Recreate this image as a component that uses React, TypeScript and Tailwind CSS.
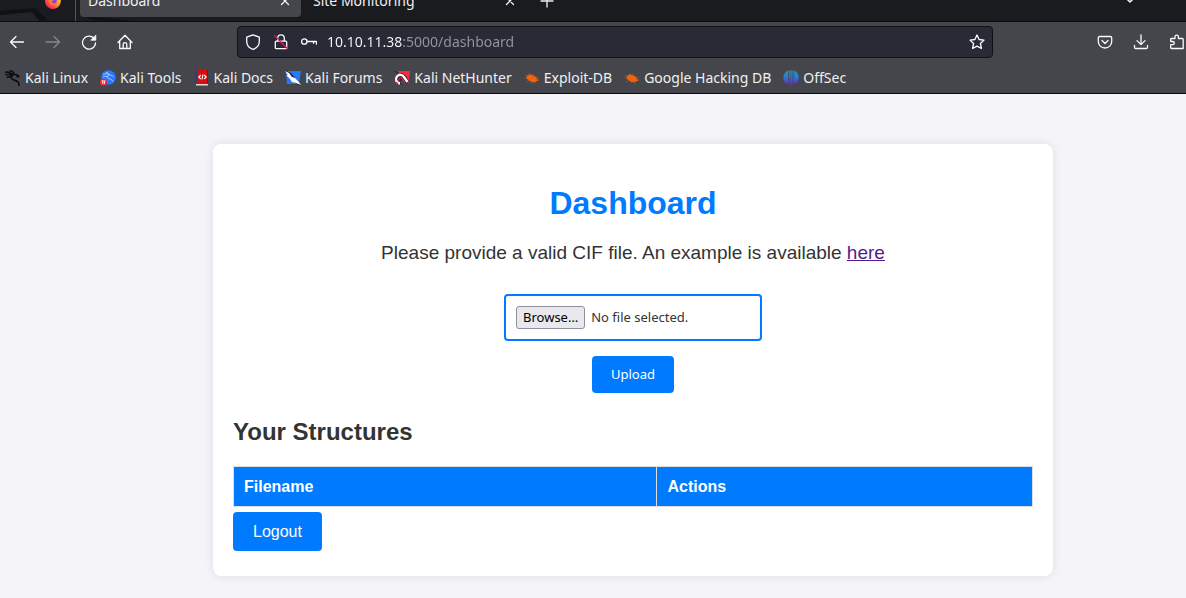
import type { ReactNode } from "react";

type IconProps = { children: ReactNode; className?: string };

const Icon = ({ children, className = "" }: IconProps) => (
  <svg
    viewBox="0 0 16 16"
    className={`h-4 w-4 shrink-0 ${className}`}
    fill="none"
    stroke="currentColor"
    strokeWidth="1.3"
    strokeLinecap="round"
    strokeLinejoin="round"
    aria-hidden="true"
  >
    {children}
  </svg>
);

const CloseIcon = () => (
  <Icon>
    <path d="M4.5 4.5l7 7M11.5 4.5l-7 7" />
  </Icon>
);

const FirefoxLogo = () => (
  <svg viewBox="0 0 16 16" className="h-4 w-4 shrink-0" aria-hidden="true">
    <defs>
      <linearGradient id="fox" x1="1" y1="0" x2="0.1" y2="1">
        <stop offset="0" stopColor="#ffe23a" />
        <stop offset="0.45" stopColor="#ff9a2a" />
        <stop offset="0.75" stopColor="#ff3b53" />
        <stop offset="1" stopColor="#e3158a" />
      </linearGradient>
    </defs>
    <path d="M8 16A8 8 0 0 1 .8 4.5L2.5 2l1 2L6 3l4-3c0 2 2 2.5 3 4l1-1a8 8 0 0 1-6 13z" fill="url(#fox)" />
    <circle cx="8" cy="7.5" r="3.8" fill="#8a3ff0" />
    <path d="M3.5 6.5c2-1 4-.5 5 1-1.5.2-2 1-1.3 2C8 10.5 10 11 11.8 9c-.3 2.5-2 3.5-4 3.5A4.5 4.5 0 0 1 3.5 8z" fill="#ff7a2d" />
  </svg>
);

const KaliLinuxLogo = () => (
  <Icon className="text-[#0c0c0e]">
    <path
      d="M.5 2.2C3 1.5 5 2 7.200 4.300M1 4.700c2-.8 4-.5 6 .8M2.500 7.300c1.500-.8 3-.9 4.500-.6M5 .8C7 1 9 3 9.500 4.500c2-.2 3.500.8 4.500 2l-2 .2M9 4.500c-2.500.5-3.500 2.500-2 4.500 1.500 1.600 4.500 1.200 6 3 .8 1 1 2 1 3.500"
      strokeWidth="1.600"
    />
  </Icon>
);

const KaliToolsLogo = () => (
  <svg viewBox="0 0 16 16" className="h-4 w-4 shrink-0" aria-hidden="true">
    <circle cx="8.5" cy="7.5" r="7.3" fill="#2777ff" />
    <path d="M3 4.5c3-1.2 4.5-.8 6 .5M3 7c2.500-1 4-.8 5-.2M6 2.500c2 .3 3 1 3.500 2.500 2 0 3 1 4 2M9.500 5c-2 .5-2.500 2-1.500 3 1.500 1.300 4 1 5 3.500" fill="none" stroke="#b9d3ff" strokeWidth=".9" />
    <circle cx="3.500" cy="12.300" r="3.500" fill="#f0272d" />
    <path d="M1.500 11h4M2.700 11v3M4.400 11v3" stroke="#fff" strokeWidth=".9" />
  </svg>
);

const KaliDocsLogo = () => (
  <svg viewBox="0 0 16 16" className="h-4 w-4 shrink-0" aria-hidden="true">
    <path d="M2 1l1.500-1v15L2 14.500z" fill="#283a70" />
    <path d="M3 0h11v14H3z" fill="#d80d12" />
    <path d="M2 14h12v1.500H2z" fill="#e8d5d5" />
    <path d="M13 0h1v14h-1z" fill="#9b090d" />
    <path d="M6.700 5L4.800 7l1.900 2M10.300 5l1.900 2-1.900 2M9 4.500L8 9.500" fill="none" stroke="#fff" strokeWidth="1.100" />
  </svg>
);

const KaliForumsLogo = () => (
  <svg viewBox="0 0 16 16" className="h-4 w-4 shrink-0" aria-hidden="true">
    <path d="M1 1h15l-2 13H2z" fill="#2878f5" />
    <path d="M0 0l6 3 4 5 5 6v2l-5-3-5-3-2-5z" fill="#20252d" />
    <path d="M0 1l4 2 3 4 3 1 3 3 3 4-5-2-4-1-3-4-3-3 2 .5z" fill="#fff" />
  </svg>
);

const NetHunterLogo = () => (
  <svg viewBox="0 0 16 16" className="h-4 w-4 shrink-0" aria-hidden="true">
    <path d="M4 1h12l-1.500 13L4 4z" fill="#f32c3c" />
    <path d="M0 1l5 1-1 2M2 13l-1-4 2-4 5-2 4 3 3 5-2 3-4-4-3 1 2 4z" fill="#262a32" />
    <path d="M6 13.500C2 13 1 9 3 6.500 5 4 8.500 4.500 10 7l3.500 5" fill="none" stroke="#fff" strokeWidth="2.300" />
    <path d="M5 11c-1-2.500 1.500-4 3-2.500l2.500 4M2 12l2 2" fill="none" stroke="#df1f42" strokeWidth="1.300" />
  </svg>
);

const ExploitLogo = () => (
  <svg viewBox="0 0 16 16" className="h-4 w-4 shrink-0" aria-hidden="true">
    <path d="M1 5l3 1M.5 8h4M2 12l3.500-1.500M5 3l1.500 2M9 3.500l1 2M7 13.500l1-2M11 14l-.5-2M12 7l3 1M13 10h2.500" stroke="#a8501d" strokeWidth=".9" />
    <path d="M2.500 7C4 4.500 6.500 4 9 5.200L12 7l1 2 1.500 1.500-2 .8C10 13 7 12 5 10.500L3 9z" fill="#f4600c" />
  </svg>
);

const OffSecLogo = () => (
  <svg viewBox="0 0 16 16" className="h-4 w-4 shrink-0" aria-hidden="true">
    <defs>
      <linearGradient id="offsec" gradientUnits="userSpaceOnUse" x1="0" y1="0" x2="0" y2="16">
        <stop offset="0" stopColor="#16a7bd" />
        <stop offset="0.5" stopColor="#3770cc" />
        <stop offset="1" stopColor="#6a18df" />
      </linearGradient>
    </defs>
    <path d="M5 .8v13.400C-1 12-1.200 3 5 .8zM5.700.5h1.100v14.200l-1.100-.3zM7.400.5h1.400V16H7.400zM9.400.5h1.100v13.900l-1.100.3zM11.200.8c6.200 2.200 6 11.200 0 13.400z" fill="url(#offsec)" />
  </svg>
);

const bookmarks = [
  { label: "Kali Linux", logo: <KaliLinuxLogo /> },
  { label: "Kali Tools", logo: <KaliToolsLogo /> },
  { label: "Kali Docs", logo: <KaliDocsLogo /> },
  { label: "Kali Forums", logo: <KaliForumsLogo /> },
  { label: "Kali NetHunter", logo: <NetHunterLogo /> },
  { label: "Exploit-DB", logo: <ExploitLogo /> },
  { label: "Google Hacking DB", logo: <ExploitLogo /> },
  { label: "OffSec", logo: <OffSecLogo /> },
];

const ToolButton = ({ label, disabled, children }: { label: string; disabled?: boolean; children: ReactNode }) => (
  <button
    type="button"
    aria-label={label}
    disabled={disabled}
    className="flex h-8 w-8 shrink-0 items-center justify-center disabled:text-[#85868c]"
  >
    {children}
  </button>
);

const TabStrip = () => (
  <div className="relative flex h-[22px] items-end overflow-hidden border-b border-[#0c0c0d] bg-[#1a1b1f] text-[#f0f0f2]">
    <svg className="absolute left-0 top-0 h-[22px] w-40" viewBox="0 0 160 22" aria-hidden="true">
      <path d="M0 11l35-3 10 9 3 5H0z" fill="#101114" />
      <path d="M0 15l32-3 8 10H0z" fill="#222328" />
      <path d="M80 15l60 7H98z" fill="#101114" />
    </svg>
    <div className="relative mb-1 flex h-8 w-[75px] shrink-0 items-center justify-end pr-[14px]">
      <FirefoxLogo />
    </div>
    <div className="relative h-10 border-l border-[#55565b]" />
    <div className="relative mb-1 ml-1 flex h-8 w-[221px] shrink-0 items-center justify-between rounded bg-[#44464c] px-2 text-sm">
      <span>Dashboard</span>
      <button type="button" aria-label="Close Dashboard">
        <CloseIcon />
      </button>
    </div>
    <div className="mb-1 ml-1 flex h-8 w-[221px] shrink-0 items-center justify-between px-2 text-sm">
      <span>Site Monitoring</span>
      <button type="button" aria-label="Close Site Monitoring">
        <CloseIcon />
      </button>
    </div>
    <button type="button" aria-label="New tab" className="mb-1 ml-[13px] flex h-8 items-center">
      <Icon>
        <path d="M8 2v12M2 8h12" />
      </Icon>
    </button>
    <button type="button" aria-label="List all tabs" className="mb-1 ml-auto mr-12 flex h-8 items-center">
      <Icon>
        <path d="M4 5l4 4 4-4" strokeWidth="1.600" />
      </Icon>
    </button>
  </div>
);

const Toolbar = () => (
  <div className="flex h-10 items-center pl-px text-[#fbfbfe]">
    <div className="flex shrink-0 gap-1">
      <ToolButton label="Back">
        <Icon>
          <path d="M14.500 8H1.500M7 2.500L1.500 8 7 13.500" />
        </Icon>
      </ToolButton>
      <ToolButton label="Forward" disabled>
        <Icon>
          <path d="M1 8h13.500M9 2.500L14.500 8 9 13.500" />
        </Icon>
      </ToolButton>
      <ToolButton label="Reload">
        <Icon>
          <path d="M13.700 5.500A6.500 6.500 0 1 0 14.500 9" />
          <path d="M14.800 1.500v4.700h-4.700z" fill="currentColor" strokeWidth=".8" />
        </Icon>
      </ToolButton>
      <ToolButton label="Home">
        <Icon>
          <path d="M1 8.500L8 1.300l7 7.200M2.700 7v7.500h10.600V7M6.200 14.500v-4.300c0-1 .8-1.500 1.800-1.500s1.800.5 1.800 1.500v4.300" />
        </Icon>
      </ToolButton>
    </div>
    <div className="mx-24 flex h-8 min-w-0 flex-1 items-center rounded border border-[#101116] bg-[#282a36] px-[7px]">
      <Icon>
        <path d="M8 .9l6.300 2.300v4C14.300 11 12 14 8 15.300 4 14 1.700 11 1.700 7.200v-4z" />
      </Icon>
      <Icon className="ml-3">
        <path d="M4.700 7V4.200a3.300 3.300 0 0 1 6.600 0V7M3.300 7.200h9.400a1 1 0 0 1 1 1v5.500a1 1 0 0 1-1 1H3.300a1 1 0 0 1-1-1V8.200a1 1 0 0 1 1-1z" />
        <path d="M1.500 1.500l13 13.300" stroke="#f01455" />
      </Icon>
      <Icon className="ml-3">
        <circle cx="3.300" cy="7.500" r="2.700" />
        <path d="M6 7.500h9.400V10M12.500 7.500v1.700" />
      </Icon>
      <input
        type="text"
        aria-label="Address"
        defaultValue="10.10.11.38:5000/dashboard"
        className="ml-[10px] min-w-0 flex-1 bg-[linear-gradient(to_right,#fbfbfe_75px,#94959d_75px)] bg-clip-text text-sm text-transparent outline-none"
      />
      <button type="button" aria-label="Bookmark this page">
        <Icon>
          <path d="M8 1l2.100 4.500 4.900.6-3.600 3.400 1 5L8 12.100l-4.400 2.400 1-5L1 6.100l4.900-.6z" />
        </Icon>
      </button>
    </div>
    <div className="-mr-[7px] flex shrink-0 gap-1">
      <ToolButton label="Save to Pocket">
        <Icon>
          <path d="M2.500 2.500h11c.7 0 1.200.5 1.200 1.200V7.500a6.700 6.500 0 0 1-13.400 0V3.700c0-.7.5-1.200 1.200-1.200zM5 6.500l3 3 3-3" />
        </Icon>
      </ToolButton>
      <ToolButton label="Downloads">
        <Icon>
          <path d="M8 .8v9.500M4 6.600l4 4 4-4M1.500 11.500v1.700c0 .7.500 1.300 1.300 1.300h10.400c.8 0 1.300-.6 1.300-1.300v-1.700" />
        </Icon>
      </ToolButton>
      <ToolButton label="Extensions">
        <Icon>
          <path d="M2.500 4.500H6V2.800a1.700 1.700 0 0 1 3.400 0v1.700h3.800a1 1 0 0 1 1 1v9H2.500a.8.8 0 0 1-.8-.8v-3h2a1.600 1.600 0 0 0 0-3.200h-2V5.300a.8.8 0 0 1 .8-.8z" />
        </Icon>
      </ToolButton>
    </div>
  </div>
);

const BookmarksBar = () => (
  <nav aria-label="Bookmarks" className="flex h-8 items-center gap-3 whitespace-nowrap border-b border-[#0c0c0d] pl-[5px] text-sm text-[#f0f0f2]">
    {bookmarks.map((bookmark) => (
      <a key={bookmark.label} href="#" className="flex items-center gap-1">
        {bookmark.logo}
        {bookmark.label}
      </a>
    ))}
  </nav>
);

const UploadForm = () => (
  <form className="mt-[30px] flex flex-col items-center font-['Noto_Sans',sans-serif] text-[13px]">
    <label className="flex w-[258px] items-center gap-[6px] rounded border-2 border-[#007bff] p-[10px]">
      <input type="file" name="file" className="sr-only" />
      <span className="rounded-[3px] border border-[#8f8f9d] bg-[#e9e9ed] px-[6px] leading-[21px] text-black">Browse…</span>
      <span>No file selected.</span>
    </label>
    <button type="submit" className="mt-[15px] rounded bg-[#007bff] px-[19px] py-2 leading-[21px] text-white">
      Upload
    </button>
  </form>
);

const App = () => {
  return (
    <div className="min-h-screen overflow-hidden bg-[#f4f4f9]">
      <header className="bg-[#44464c] font-['Noto_Sans',sans-serif]">
        <TabStrip />
        <Toolbar />
        <BookmarksBar />
      </header>

      <main className="py-[50px] pl-20 font-['Liberation_Sans',sans-serif] text-[#333]">
        <div className="mx-auto w-full max-w-[840px] rounded-lg bg-white px-5 pb-[25px] pt-[41px] shadow-[0_0_10px_rgba(0,0,0,0.1)]">
          <h1 className="text-center text-[32px] font-bold leading-9 text-[#007bff]">Dashboard</h1>
          <p className="mt-[21px] text-center text-[19px] leading-[22px]">
            Please provide a valid CIF file. An example is available{" "}
            <a href="#" className="text-[#551a8b] underline">
              here
            </a>
          </p>

          <UploadForm />

          <h2 className="mt-[25px] text-2xl font-bold leading-7">Your Structures</h2>
          <table className="mt-5 w-full border-collapse text-left text-base leading-[19px]">
            <thead>
              <tr className="bg-[#007bff] text-white">
                <th className="w-[53%] border border-[#ddd] p-[10px]">Filename</th>
                <th className="border border-[#ddd] p-[10px]">Actions</th>
              </tr>
            </thead>
          </table>
          <a href="#" className="mt-[5px] inline-block rounded bg-[#007bff] px-5 py-[10px] align-top leading-[19px] text-white">
            Logout
          </a>
        </div>
      </main>
    </div>
  );
};

export default App;
